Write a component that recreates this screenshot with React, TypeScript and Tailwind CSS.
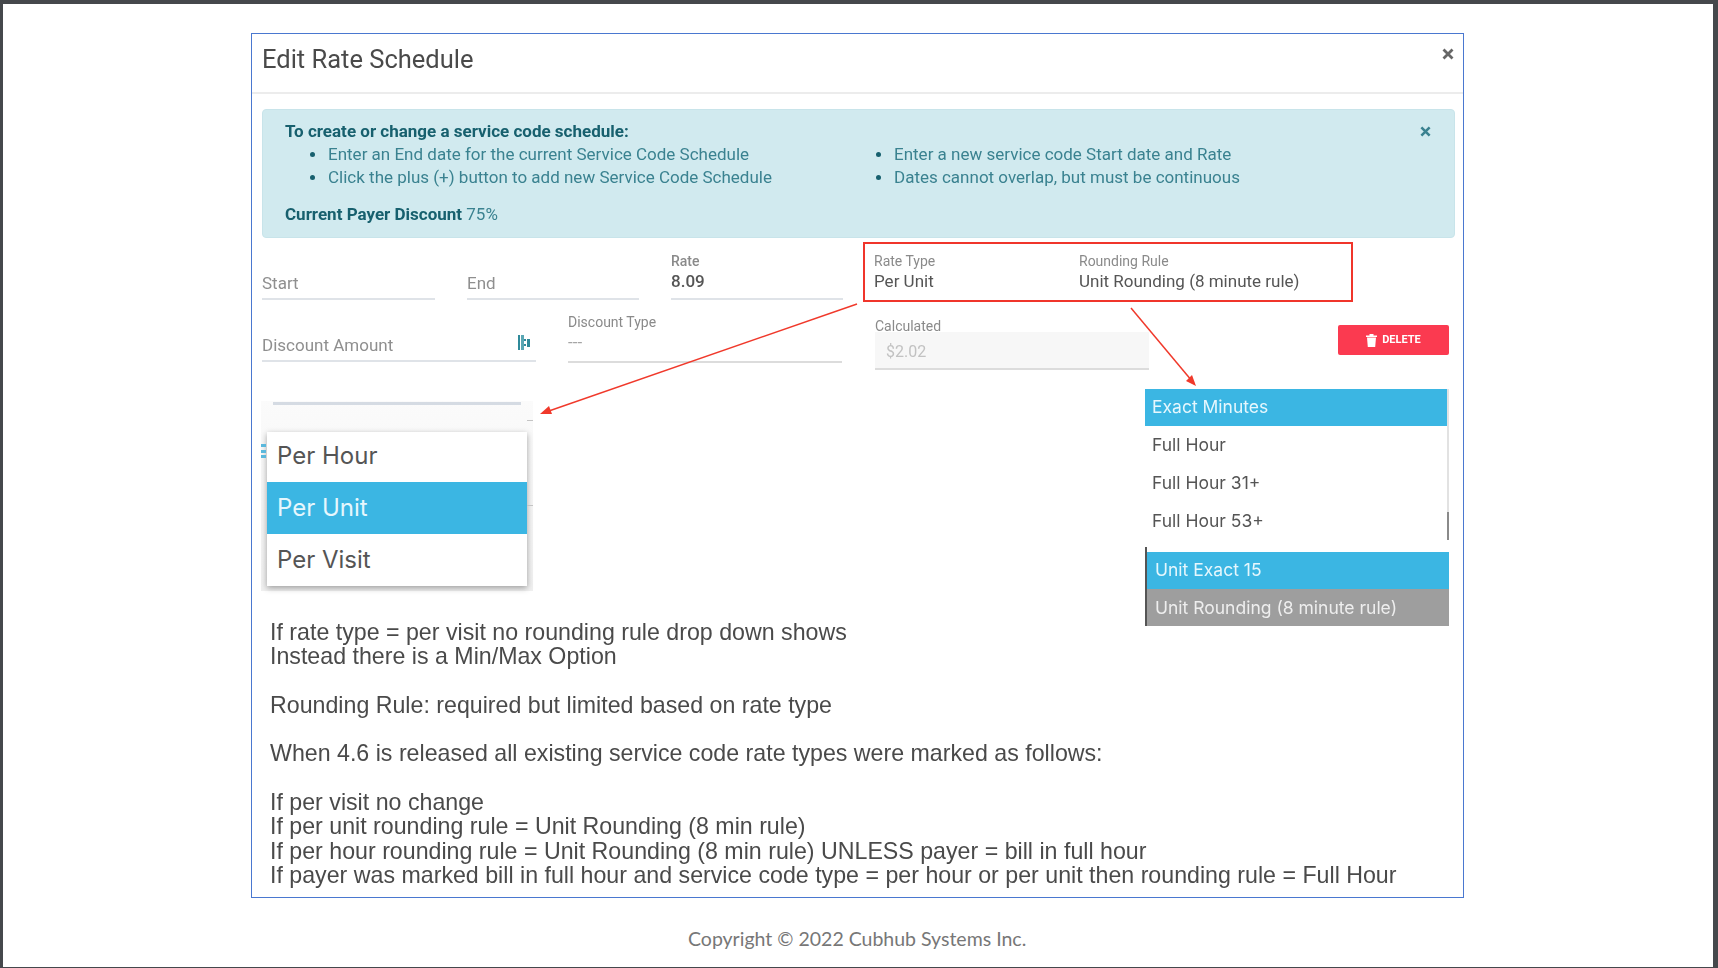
import * as React from "react";

function CloseIcon({ className }: { className?: string }) {
  return (
    <svg viewBox="0 0 12 12" className={className} fill="none" stroke="currentColor" strokeWidth="2.8" aria-hidden>
      <path d="M1.5 1.5l9 9M10.5 1.5l-9 9" />
    </svg>
  );
}

function TrashIcon() {
  return (
    <svg viewBox="0 0 11 13" className="h-[13px] w-[11px]" fill="#fff" aria-hidden>
      <path d="M0 1.5h11v1.5H0zM3.5 0h4v1.5h-4zM1 3.6h9l-.8 9.4H1.8z" />
    </svg>
  );
}

function ToggleIcon() {
  return (
    <svg viewBox="0 0 12 15" className="h-[15px] w-[12px]" aria-hidden>
      <rect x="0" y="0" width="2" height="15" fill="#2f8a9a" />
      <rect x="3" y="0" width="3" height="15" fill="#5aa6b3" />
      <rect x="6" y="4" width="2" height="2" fill="#2f8a9a" />
      <rect x="6" y="9" width="2" height="2" fill="#2f8a9a" />
      <rect x="9" y="4" width="3" height="8" fill="#2f8a9a" />
    </svg>
  );
}

function Label({ children }: { children: React.ReactNode }) {
  return <div className="text-[14px] leading-[16px] text-[#8a8a8a]">{children}</div>;
}

function Field({ label, value, placeholder, className }: { label?: string; value?: string; placeholder?: string; className: string }) {
  return (
    <div className={`${className} flex h-[48px] flex-col justify-end border-b-2`}>
      {label ? <Label>{label}</Label> : null}
      {value ? <div className="mt-[2px] text-[17px] leading-[20px]">{value}</div> : null}
      {placeholder ? <div className="text-[17px] leading-[20px] text-[#8f8f8f]">{placeholder}</div> : null}
    </div>
  );
}

function Bullet({ children }: { children: React.ReactNode }) {
  return (
    <li className="relative before:absolute before:-left-[18px] before:top-[9px] before:h-[5px] before:w-[5px] before:rounded-full before:bg-[#17606e]">
      {children}
    </li>
  );
}

function Annotations() {
  return (
    <svg className="pointer-events-none absolute -top-[4px] -left-[3px] h-[968px] w-[1718px]" viewBox="0 0 1718 968" aria-hidden>
      <line x1="857" y1="304" x2="546" y2="412" stroke="#f0392b" strokeWidth="1.5" />
      <polygon points="540,414 549,406 552,414" fill="#f0392b" />
      <line x1="1131" y1="308" x2="1192" y2="381" stroke="#f0392b" strokeWidth="1.5" />
      <polygon points="1196,386 1186,381 1192,375" fill="#f0392b" />
    </svg>
  );
}

export default function App() {
  return (
    <div className="relative h-[968px] w-[1718px] overflow-hidden border-t-[4px] border-r-[5px] border-b-[1px] border-l-[3px] border-[#45484c] bg-white font-['Roboto',sans-serif]">
      <div className="ml-[248px] mt-[29px] h-[865px] w-[1213px] border-[1.5px] border-[#4a78d0]">
        <div className="blur-[0.4px]">
          <div className="flex h-[60px] items-start justify-between border-b-2 border-[#ececec] pl-[10px] pr-[9px]">
            <h1 className="mt-[8px] text-[25.5px] leading-[34px] text-[#4a4a4a]">Edit Rate Schedule</h1>
            <CloseIcon className="mt-[14px] h-[12px] w-[12px] text-[#666]" />
          </div>

          <div className="ml-[10px] mt-[15px] h-[129px] w-[1193px] rounded-[4px] border border-[#c8e4ea] bg-[#d1eaef] pl-[22px] pr-[23px] pt-[10px] text-[17px] leading-[23px] text-[#3a8290]">
            <div className="flex items-start justify-between">
              <div className="font-bold text-[#17606e]">To create or change a service code schedule:</div>
              <CloseIcon className="mt-[6px] h-[11px] w-[11px] text-[#3a8290]" />
            </div>
            <div className="flex">
              <ul className="ml-[43px] w-[566px]">
                <Bullet>Enter an End date for the current Service Code Schedule</Bullet>
                <Bullet>Click the plus (+) button to add new Service Code Schedule</Bullet>
              </ul>
              <ul>
                <Bullet>Enter a new service code Start date and Rate</Bullet>
                <Bullet>Dates cannot overlap, but must be continuous</Bullet>
              </ul>
            </div>
            <div className="mt-[14px]">
              <span className="font-bold text-[#17606e]">Current Payer Discount</span> 75%
            </div>
          </div>

          <div className="ml-[10px] mt-[5px] flex h-[59px] items-end">
            <Field placeholder="Start" className="mb-[2px] w-[173px] border-[#dfe3e8] pb-[5px]" />
            <Field placeholder="End" className="mb-[2px] ml-[32px] w-[172px] border-[#dfe3e8] pb-[5px]" />
            <Field label="Rate" value="8.09" className="mb-[2px] ml-[32px] w-[172px] border-[#dfe3e8] pb-[7px] font-medium text-[#555]" />
            <div className="ml-[20px] flex h-[60px] w-[490px] border-2 border-[#f0352b] pl-[9px] pt-[9px] text-[#555]">
              <div className="w-[205px]">
                <Label>Rate Type</Label>
                <div className="mt-[2px] text-[17px] leading-[20px]">Per Unit</div>
              </div>
              <div>
                <Label>Rounding Rule</Label>
                <div className="mt-[2px] text-[17px] leading-[20px]">Unit Rounding (8 minute rule)</div>
              </div>
            </div>
          </div>

          <div className="ml-[10px] mt-[9px] flex h-[60px] items-start">
            <div className="relative mt-[3px] w-[274px]">
              <Field placeholder="Discount Amount" className="w-full border-[#dfe3e8] pb-[5px]" />
              <div className="absolute right-[6px] top-[21px]"><ToggleIcon /></div>
            </div>
            <Field label="Discount Type" value="---" className="ml-[32px] mt-[4px] w-[274px] border-[#dcdcdc] pb-[9px] text-[#a5a5a5]" />
            <div className="ml-[33px] w-[274px]">
              <div className="mt-[9px] text-[14px] leading-[12px] text-[#8a8a8a]">Calculated</div>
              <div className="flex h-[38px] items-center border-b-2 border-[#dcdcdc] bg-[#f7f7f7] pl-[11px] pt-[4px] text-[16px] text-[#c2c2c2]">$2.02</div>
            </div>
            <button className="ml-[189px] mt-[14px] flex h-[30px] w-[111px] items-center justify-center gap-[5px] rounded-[2px] bg-[#fb3a50] text-[11px] font-bold text-white">
              <TrashIcon />
              DELETE
            </button>
          </div>

          <div className="flex h-[256.5px] items-start justify-between">
            <div className="relative ml-[9px] mt-[30px] h-[190px] w-[272px] bg-gradient-to-b from-[#fbfbfb] to-[#f0f0f0] px-[6px]">
              <div className="mx-[6px] mt-[1px] h-[3px] bg-[#d5dbe3]" />
              <div className="absolute left-0 top-[43px] flex h-[14px] w-[5px] flex-col justify-between">
                <div className="h-[3px] bg-[#5bb8dc]" />
                <div className="h-[3px] bg-[#5bb8dc]" />
                <div className="h-[3px] bg-[#5bb8dc]" />
              </div>
              <div className="absolute right-0 top-[19px] h-[1px] w-[6px] bg-[#c4c4c4]" />
              <div className="absolute right-0 top-[104px] h-[1px] w-[6px] bg-[#c4c4c4]" />
              <div className="mt-[27px] bg-white font-['Inter',sans-serif] text-[24px] text-[#555] shadow-[0_2px_6px_rgba(0,0,0,0.35)]">
                <div className="h-[50px] pl-[10px] leading-[47px]">Per Hour</div>
                <div className="h-[52px] bg-[#3bb6e3] pl-[10px] leading-[51px] text-[#e6f7fd]">Per Unit</div>
                <div className="h-[52px] pl-[10px] leading-[51px]">Per Visit</div>
              </div>
            </div>
            <div className="mr-[14px] mt-[18px] w-[304px] font-['Inter',sans-serif] text-[17.5px] text-[#555]">
              <div className="relative border-r-2 border-[#e2e2e2]">
                <div className="flex h-[37px] items-center bg-[#3bb6e3] pl-[7px] text-[#e6f7fd]">Exact Minutes</div>
                <div className="flex h-[38px] items-center pl-[7px]">Full Hour</div>
                <div className="flex h-[38px] items-center pl-[7px]">Full Hour 31+</div>
                <div className="flex h-[38px] items-center pl-[7px]">Full Hour 53+</div>
                <div className="absolute -right-[2px] bottom-0 h-[28px] w-[2px] bg-[#8a8a8a]" />
              </div>
              <div className="mt-[7px] border-l-2 border-[#555] pt-[5px]">
                <div className="flex h-[37px] items-center bg-[#3bb6e3] pl-[8px] text-[#e6f7fd]">Unit Exact 15</div>
                <div className="flex h-[37px] items-center bg-[#9e9e9e] pl-[8px] pt-[2px] text-[#eeeeee]">Unit Rounding (8 minute rule)</div>
              </div>
            </div>
          </div>

          <div className="-mt-[7.5px] pl-[18px] font-['Liberation_Sans',Arial,sans-serif] text-[23.2px] leading-[24.3px] text-[#4a4a4a]">
            <p>If rate type = per visit no rounding rule drop down shows</p>
            <p>Instead there is a Min/Max Option</p>
            <p className="mt-[24.3px]">Rounding Rule: required but limited based on rate type</p>
            <p className="mt-[24.3px]">When 4.6 is released all existing service code rate types were marked as follows:</p>
            <p className="mt-[24.3px]">If per visit no change</p>
            <p>If per unit rounding rule = Unit Rounding (8 min rule)</p>
            <p>If per hour rounding rule = Unit Rounding (8 min rule) UNLESS payer = bill in full hour</p>
            <p>If payer was marked bill in full hour and service code type = per hour or per unit then rounding rule = Full Hour</p>
          </div>
        </div>
      </div>

      <div className="ml-[685px] mt-[29px] font-['Lato',sans-serif] text-[19.5px] leading-[24px] text-[#777]">Copyright © 2022 Cubhub Systems Inc.</div>
      <Annotations />
    </div>
  );
}
